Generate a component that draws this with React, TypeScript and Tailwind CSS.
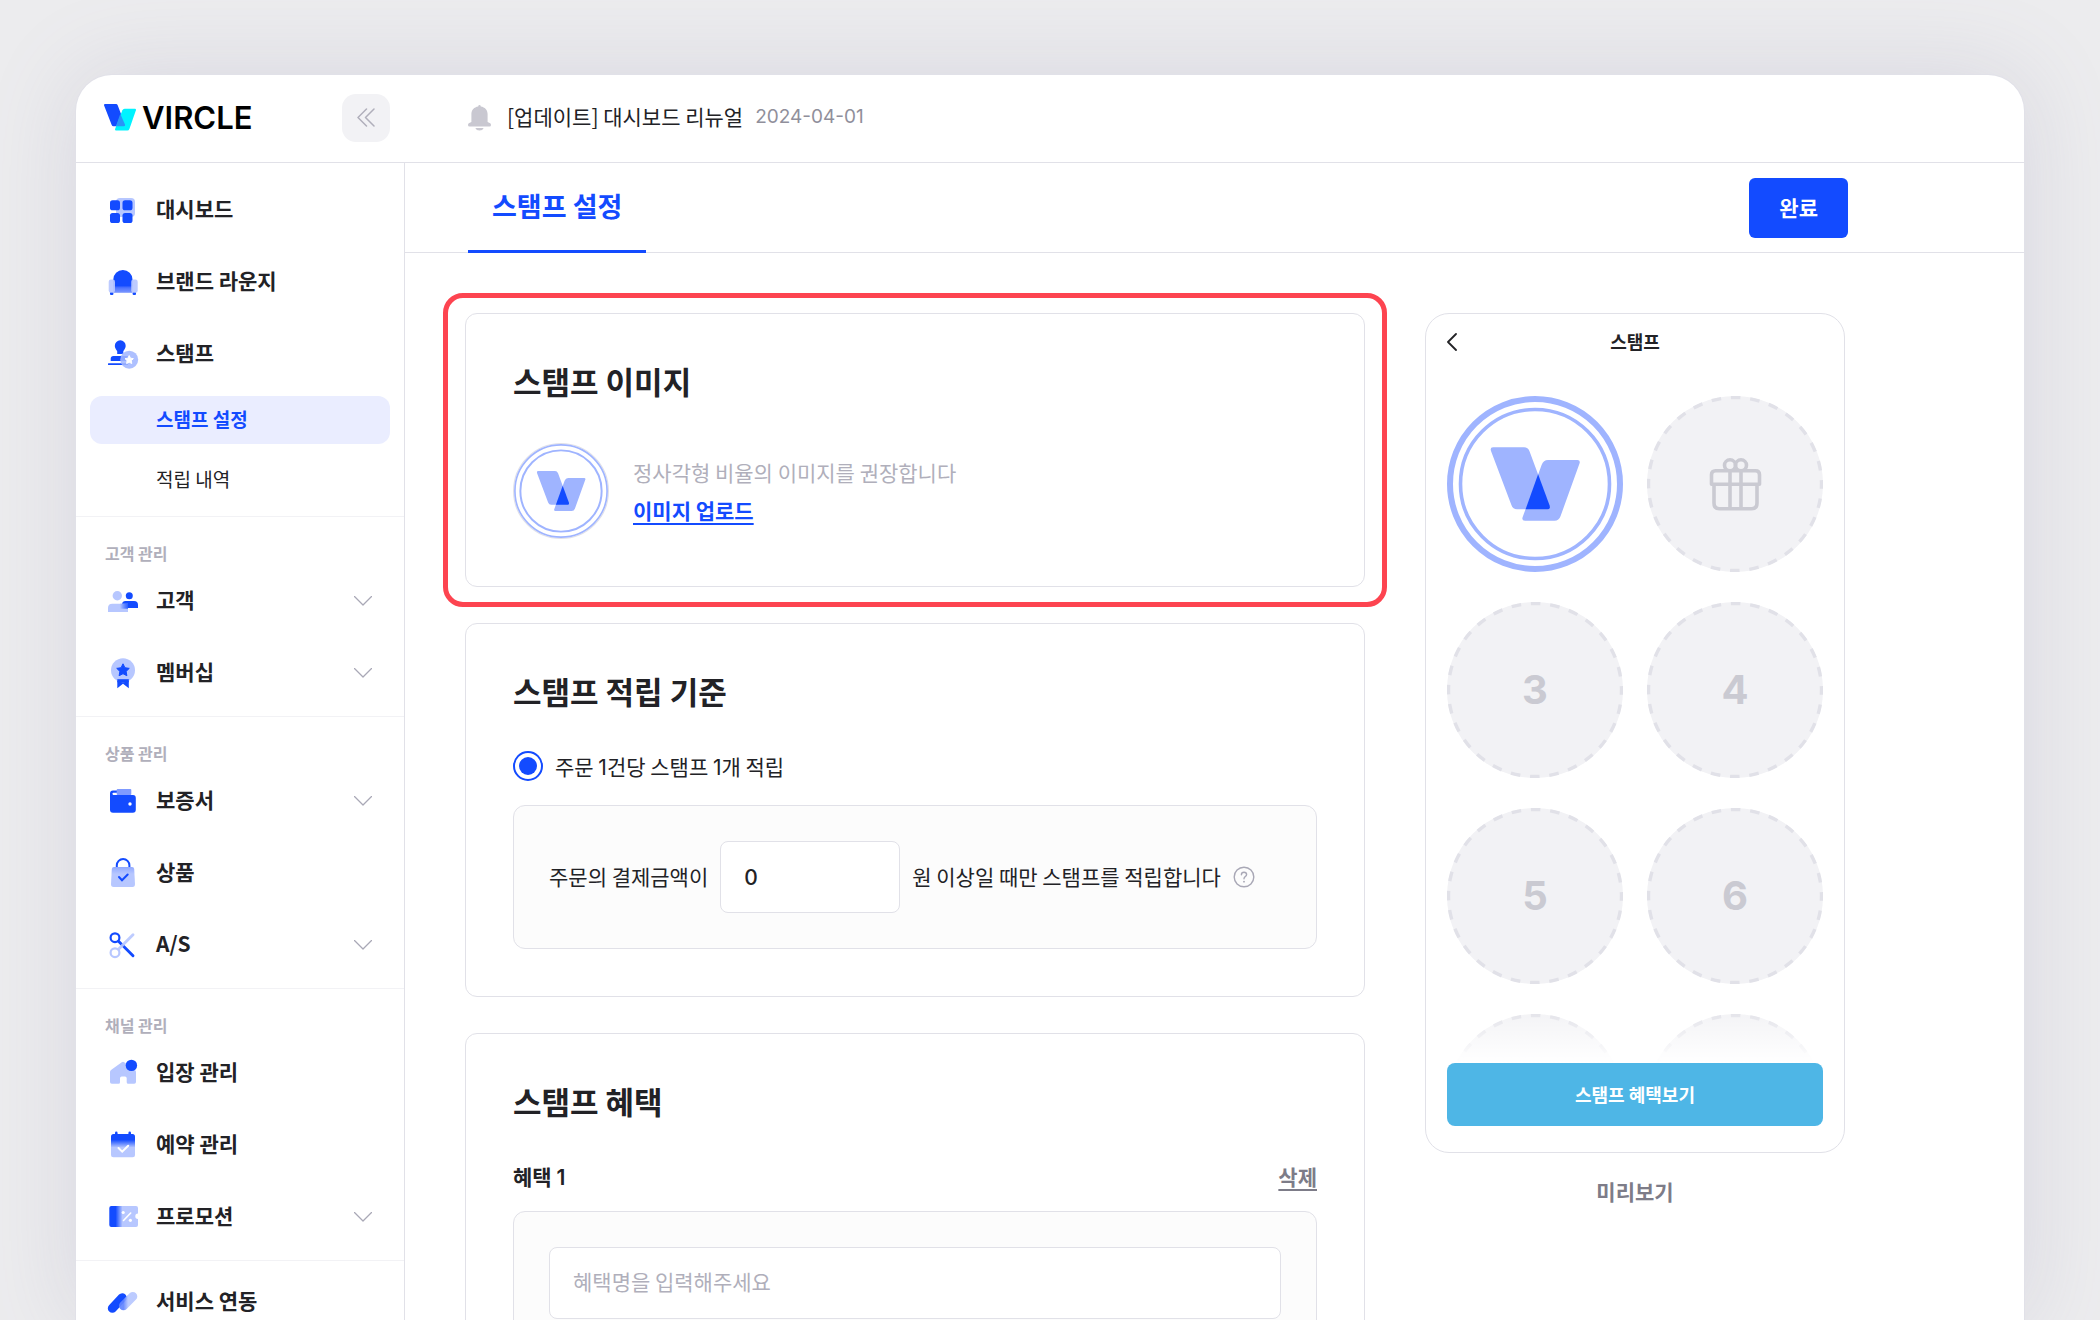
import React, { ReactNode } from 'react'

const StampLogo: React.FC<{ thin?: boolean; className?: string }> = ({ thin = false, className }) => (
  <svg viewBox="0 0 176 176" className={className} fill="none" aria-hidden="true">
    <circle cx="88" cy="88" r="88" fill="#fff" />
    {thin && <circle cx="88" cy="88" r="87" stroke="#e1e1e8" strokeWidth="2" />}
    <circle cx="88" cy="88" r={thin ? 84.5 : 85} stroke="#9fb4ff" strokeWidth={thin ? 3 : 6} />
    <circle cx="88" cy="88" r="74.5" stroke="#9fb4ff" strokeWidth="3.6" />
    <path
      d="M46 51.3H77Q81 51.3 82.6 55.5L102.6 109.5Q103.8 113.3 100.5 113.3H70Q66 113.3 64.4 109L44 55Q42.8 51.3 46 51.3Z"
      fill="#9fb4ff"
    />
    <path
      d="M101 64H130.4Q133.7 64 132.5 67.5L113.6 120Q112 124.7 107.5 124.7H78Q74.5 124.7 75.6 121.3L94.6 69Q96.5 64 101 64Z"
      fill="#9fb4ff"
    />
    <path d="M91.1 78.3L102.6 109.5Q103.8 113.3 100.5 113.3H78.6Z" fill="#134bff" />
  </svg>
)

const Logo: React.FC = () => (
  <a href="#home" className="flex items-center gap-[6px]">
    <svg width="32" height="27" viewBox="0 0 32 27" aria-hidden="true">
      <path d="M1 0H12Q13.2 0 13.7 1.2L21 20.6Q21.5 22.3 20 22.3H9.4Q8.2 22.3 7.7 21L.1 1.5Q-.3 0 1 0Z" fill="#134bff" />
      <path d="M20.6 4.8H31Q32.3 4.8 31.9 6.3L25.4 25Q24.8 26.5 23.4 26.5H12Q10.7 26.5 11.1 25L18.4 6.3Q19 4.8 20.6 4.8Z" fill="#00f3ff" />
      <path d="M16.3 9.8L21 20.6Q21.5 22.3 20 22.3H12Z" fill="#2994f7" />
    </svg>
    <span className="font-['Inter',sans-serif] text-[31px] leading-8 font-semibold text-black">VIRCLE</span>
  </a>
)

const starPoints = (cx: number, cy: number, r: number) =>
  Array.from({ length: 10 }, (_, i) => {
    const a = -Math.PI / 2 + (i * Math.PI) / 5
    const d = i % 2 ? r * 0.5 : r
    return `${(cx + d * Math.cos(a)).toFixed(2)},${(cy + d * Math.sin(a)).toFixed(2)}`
  }).join(' ')

const icons: Record<string, ReactNode> = {
  dashboard: (
    <>
      <rect x="8" y="3" width="19" height="19" rx="4" fill="#b7c7ff" />
      <rect x="2" y="5.3" width="10" height="10" rx="2.6" fill="#134bff" />
      <rect x="14.5" y="5.3" width="10" height="10" rx="2.6" fill="#134bff" />
      <rect x="2" y="18" width="10" height="10" rx="2.6" fill="#134bff" />
      <rect x="14.5" y="18" width="10" height="10" rx="2.6" fill="#134bff" />
    </>
  ),
  lounge: (
    <>
      <defs>
        <linearGradient id="seat" x1="0" y1="0" x2="0" y2="1">
          <stop offset="0" stopColor="#134bff" />
          <stop offset=".3" stopColor="#4d73ff" />
          <stop offset="1" stopColor="#7d99ff" />
        </linearGradient>
      </defs>
      <rect x="2" y="25" width="3.4" height="3" rx="1" fill="#134bff" />
      <rect x="24.6" y="25" width="3.4" height="3" rx="1" fill="#134bff" />
      <path d="M5.3 12.5a9.6 9.6 0 0 1 19.2 0V19H5.3Z" fill="#134bff" />
      <rect x="5.3" y="18.6" width="19.2" height="7.2" fill="url(#seat)" />
      <rect x="0.7" y="12.6" width="6.3" height="13.2" rx="2.2" fill="#b7c7ff" fillOpacity=".92" />
      <rect x="23.2" y="12.6" width="6.5" height="13.2" rx="2.2" fill="#b7c7ff" fillOpacity=".92" />
    </>
  ),
  stamp: (
    <>
      <path d="M12.3 1.3a5.5 5.5 0 0 1 5.4 5.6c0 2.4-1.8 3.6-2.4 5.4V15H9.2v-2.7C8.6 10.5 6.8 9.3 6.8 6.9a5.5 5.5 0 0 1 5.5-5.6Z" fill="#134bff" />
      <path d="M5.5 17H19q2 0 2 2v3H2.7v-2.2Q2.7 17 5.5 17Z" fill="#134bff" />
      <rect x="0" y="24.3" width="20" height="1.8" rx=".5" fill="#134bff" />
      <circle cx="21.2" cy="20.7" r="9" fill="#a3b7ff" fillOpacity=".88" />
      <polygon points={starPoints(21.2, 21, 4.4)} fill="#fff" stroke="#fff" strokeLinejoin="round" />
    </>
  ),
  customer: (
    <>
      <defs>
        <linearGradient id="overlap" x1="0" y1="0" x2="1" y2="0">
          <stop offset="0" stopColor="#b7c7ff" />
          <stop offset="1" stopColor="#134bff" stopOpacity=".85" />
        </linearGradient>
      </defs>
      <circle cx="21.3" cy="9.7" r="3.5" fill="#134bff" />
      <path d="M14 22v-3.5Q14 15 17.5 15H26q4 0 4 4v3Z" fill="#134bff" />
      <circle cx="9.3" cy="9.7" r="4.7" fill="#b7c7ff" />
      <path d="M0 26v-4q0-4.3 4.3-4.3H20V26Z" fill="#b7c7ff" />
      <rect x="12" y="17.7" width="8" height="5" fill="url(#overlap)" />
    </>
  ),
  membership: (
    <>
      <path d="M9.3 20h11.5v10.3L15 25.8l-5.7 4.5Z" fill="#134bff" />
      <circle cx="15" cy="12.3" r="12" fill="#b7c7ff" />
      <path d="M9.3 21.2h11.5v3H9.3Z" fill="#134bff" />
      <polygon points={starPoints(15, 12.4, 6.6)} fill="#134bff" stroke="#134bff" strokeLinejoin="round" />
    </>
  ),
  wallet: (
    <>
      <path d="M5 4.5h6V9h14q2.8 0 2.8 3v11.7q0 3-3 3H5q-3 0-3-3V7.5q0-3 3-3Z" fill="#134bff" />
      <rect x="4.5" y="6.7" width="6" height="2.2" rx=".8" fill="#fff" />
      <rect x="8.7" y="3" width="14.6" height="6" rx="1" fill="#7f9aff" />
      <circle cx="22" cy="18" r="1.7" fill="#fff" />
    </>
  ),
  bag: (
    <>
      <defs>
        <linearGradient id="bag" x1="0" y1="0" x2="0" y2="1">
          <stop offset="0" stopColor="#91a9ff" />
          <stop offset=".35" stopColor="#b7c7ff" />
        </linearGradient>
      </defs>
      <path d="M8.8 10V7.3a6.3 6.3 0 0 1 12.6 0V10" fill="none" stroke="#134bff" strokeWidth="2" />
      <path d="M6 9h18q2 0 2.2 2L27 26q.1 3-2.5 3h-19Q2.9 29 3 26l.8-15Q4 9 6 9Z" fill="url(#bag)" />
      <path d="M11 19l3 3.2 5.7-5.7" fill="none" stroke="#134bff" strokeWidth="2" strokeLinecap="round" />
    </>
  ),
  scissors: (
    <g fill="none" strokeLinecap="round">
      <circle cx="7" cy="7.7" r="4.4" stroke="#134bff" strokeWidth="2.2" />
      <path d="M10.5 11.3L25 25.8" stroke="#134bff" strokeWidth="2.9" />
      <circle cx="7" cy="22.7" r="4.4" stroke="#b7c7ff" strokeWidth="2.2" />
      <path d="M10.5 19.3L25 4.8" stroke="#b7c7ff" strokeOpacity=".9" strokeWidth="2.9" />
    </g>
  ),
  house: (
    <>
      <path d="M13.8 4.2q1.2-.9 2.4 0L27 12q1 .8 1 2v10q0 1.8-1.8 1.8h-6q-1.5 0-1.5-1.5v-4q0-1.7-1.7-1.7h-3.3q-1.7 0-1.7 1.7v4q0 1.5-1.5 1.5H3.8Q2 25.8 2 24V14q0-1.2 1-2Z" fill="#b7c7ff" />
      <circle cx="23.4" cy="7.4" r="5.7" fill="#134bff" />
    </>
  ),
  calendar: (
    <>
      <defs>
        <linearGradient id="cal" x1="0" y1="0" x2="0" y2="1">
          <stop offset=".25" stopColor="#134bff" />
          <stop offset=".58" stopColor="#b7c7ff" />
        </linearGradient>
      </defs>
      <rect x="7" y="1.6" width="2.6" height="5" rx="1.3" fill="#134bff" />
      <rect x="20.4" y="1.6" width="2.6" height="5" rx="1.3" fill="#134bff" />
      <rect x="3" y="4" width="24" height="23.3" rx="2.5" fill="url(#cal)" />
      <path d="M10.5 18l3.7 3.6 6-5.9" fill="none" stroke="#fff" strokeWidth="2" strokeLinecap="round" />
    </>
  ),
  ticket: (
    <>
      <defs>
        <linearGradient id="ticket" x1="0" y1="0" x2="1" y2="0">
          <stop offset=".22" stopColor="#134bff" />
          <stop offset=".46" stopColor="#b7c7ff" />
        </linearGradient>
      </defs>
      <path d="M3.3 4H28q2 0 2 2v5.6a2.7 2.7 0 0 0 0 5.4v6q0 2-2 2H3.3q-2 0-2-2V6q0-2 2-2Z" fill="url(#ticket)" />
      <circle cx="15.2" cy="10.5" r="1.6" fill="#fff" />
      <circle cx="22.4" cy="18.3" r="1.6" fill="#fff" />
      <path d="M15.5 18.5l7.2-7.5" stroke="#fff" strokeWidth="1.6" strokeLinecap="round" />
    </>
  ),
  link: (
    <>
      <defs>
        <linearGradient id="capsule" x1="0" y1="0" x2="1" y2="0">
          <stop offset="0" stopColor="#6385ff" />
          <stop offset=".5" stopColor="#b7c7ff" />
        </linearGradient>
      </defs>
      <path d="M4.3 21.3L14.3 10.7" stroke="#134bff" strokeWidth="9" strokeLinecap="round" />
      <path d="M15.5 18.7L24.8 9.4" stroke="url(#capsule)" strokeOpacity=".92" strokeWidth="9" strokeLinecap="round" />
    </>
  ),
}

const ChevronDown: React.FC = () => (
  <svg width="18" height="10" viewBox="0 0 18 10" fill="none" stroke="#a9a8b6" strokeWidth="1.3" aria-hidden="true">
    <path d="M.5.5L9 9 17.5.5" strokeLinecap="round" strokeLinejoin="round" />
  </svg>
)

// Digits are set in Inter, Hangul in the page font
const Num: React.FC<{ children: ReactNode }> = ({ children }) => (
  <span className="font-['Inter',sans-serif] leading-none">{children}</span>
)

interface NavItemProps {
  icon: string
  label: string
  expandable?: boolean
}

const NavItem: React.FC<NavItemProps> = ({ icon, label, expandable = false }) => (
  <a href={`#${icon}`} className="flex h-[72px] items-center pr-8 pl-8 text-[21px] font-semibold text-[#222226]">
    <svg width="30" height="30" viewBox="0 0 30 30" className="mr-[18px] overflow-visible" aria-hidden="true">
      {icons[icon]}
    </svg>
    <span className="flex-1 pb-[2px]">{label}</span>
    {expandable && <ChevronDown />}
  </a>
)

interface NavGroup {
  title: string
  items: NavItemProps[]
}

const groups: NavGroup[] = [
  {
    title: '고객 관리',
    items: [
      { icon: 'customer', label: '고객', expandable: true },
      { icon: 'membership', label: '멤버십', expandable: true },
    ],
  },
  {
    title: '상품 관리',
    items: [
      { icon: 'wallet', label: '보증서', expandable: true },
      { icon: 'bag', label: '상품' },
      { icon: 'scissors', label: 'A/S', expandable: true },
    ],
  },
  {
    title: '채널 관리',
    items: [
      { icon: 'house', label: '입장 관리' },
      { icon: 'calendar', label: '예약 관리' },
      { icon: 'ticket', label: '프로모션', expandable: true },
    ],
  },
]

const Sidebar: React.FC = () => (
  <nav className="w-[329px] shrink-0 overflow-hidden border-r border-[#e1e1e8]">
    <div className="pt-[11px] pb-3">
      <NavItem icon="dashboard" label="대시보드" />
      <NavItem icon="lounge" label="브랜드 라운지" />
      <NavItem icon="stamp" label="스탬프" />
      <div className="mt-[6px] flex flex-col gap-3 pr-[14px] pl-[14px] text-[19px]">
        <a href="#stamp-settings" className="flex h-12 items-center rounded-xl bg-[#eaedff] pb-[2px] pl-[66px] font-semibold text-[#134bff]">
          스탬프 설정
        </a>
        <a href="#stamp-history" className="flex h-12 items-center rounded-xl pb-[2px] pl-[66px] text-[#222226]">
          적립 내역
        </a>
      </div>
    </div>
    {groups.map((group) => (
      <div key={group.title} className="border-t border-[#f2f2f5] pt-6 pb-[7px]">
        <h2 className="px-[29px] text-[16px] leading-6 font-semibold text-[#b0afbb]">{group.title}</h2>
        {group.items.map((item) => (
          <NavItem key={item.icon} {...item} />
        ))}
      </div>
    ))}
    <div className="border-t border-[#f2f2f5] pt-[5px]">
      <NavItem icon="link" label="서비스 연동" />
    </div>
  </nav>
)

const TopBar: React.FC = () => (
  <header className="flex h-[88px] shrink-0 items-center border-b border-[#e1e1e8] pb-[2px]">
    <div className="flex w-[329px] shrink-0 items-center justify-between pr-[15px] pl-7">
      <Logo />
      <button type="button" aria-label="메뉴 접기" className="flex size-12 items-center justify-center rounded-[14px] bg-[#f2f2f5]">
        <svg width="18" height="19" viewBox="0 0 18 19" fill="none" stroke="#b0afbb" strokeWidth="1.5" strokeLinecap="round" strokeLinejoin="round">
          <path d="M9.5 1L1 9.5 9.5 18M17 1L8.5 9.5 17 18" />
        </svg>
      </button>
    </div>
    <a href="#notice" className="flex items-center pl-[63px]">
      <svg width="23" height="26" viewBox="0 0 23 26" fill="#c9c8d1" aria-hidden="true">
        <path d="M11.5 0q1.1 0 1.3 1.4C16.9 2 19.6 5 19.6 9v8l2.6 1.2q.8.5.8 1.8 0 1.5-1.5 1.5h-20Q0 21.5 0 20q0-1.3.8-1.8L3.4 17V9c0-4 2.7-7 6.8-7.6Q10.4 0 11.5 0Z" />
        <path d="M7.3 23h8.4q-1 2.6-4.2 2.6T7.3 23Z" />
      </svg>
      <span className="ml-4 pb-[2px] text-[21px] text-[#222226]">[업데이트] 대시보드 리뉴얼</span>
      <time className="ml-3 font-['Inter',sans-serif] text-[19px] text-[#908f9b]">2024-04-01</time>
    </a>
  </header>
)

interface CardProps {
  title: string
  children: ReactNode
}

const Card: React.FC<CardProps> = ({ title, children }) => (
  <section className="rounded-xl border border-[#e1e1e8] bg-white p-[47px]">
    <h2 className="mb-10 text-[31px] leading-10 font-bold text-[#222226]">{title}</h2>
    {children}
  </section>
)

const Panel: React.FC<{ children: ReactNode }> = ({ children }) => (
  <div className="rounded-xl border border-[#e1e1e8] bg-[#fcfcfc] p-[35px] text-[21px] text-[#222226]">{children}</div>
)

const StampImageCard: React.FC = () => (
  <div className="relative">
    <Card title="스탬프 이미지">
      <div className="flex items-center gap-6 pt-[2px] text-[21px]">
        <StampLogo thin className="size-24" />
        <div className="flex flex-col items-start gap-2 leading-[30px]">
          <p className="text-[#b0afbb]">정사각형 비율의 이미지를 권장합니다</p>
          <button type="button" className="font-semibold text-[#134bff] underline underline-offset-4">
            이미지 업로드
          </button>
        </div>
      </div>
    </Card>
    <div className="pointer-events-none absolute -inset-x-[22px] -inset-y-5 rounded-[20px] border-[5px] border-[#fd4450]" />
  </div>
)

const StampRuleCard: React.FC = () => (
  <Card title="스탬프 적립 기준">
    <label className="mb-6 flex items-center gap-3 text-[21px] leading-[30px] text-[#222226]">
      <input
        type="radio"
        name="rule"
        defaultChecked
        className="size-[30px] appearance-none rounded-full border-2 border-[#134bff] bg-clip-content p-1 checked:bg-[#134bff]"
      />
      <span>
        주문 <Num>1</Num>건당 스탬프 <Num>1</Num>개 적립
      </span>
    </label>
    <Panel>
      <div className="flex items-center gap-3">
        <label htmlFor="min-amount">주문의 결제금액이</label>
        <input
          id="min-amount"
          type="text"
          defaultValue="0"
          className="h-[72px] w-[180px] rounded-lg border border-[#e1e1e8] bg-white px-[23px] font-['Inter',sans-serif] font-medium"
        />
        <span>원 이상일 때만 스탬프를 적립합니다</span>
        <button type="button" aria-label="도움말">
          <svg width="22" height="22" viewBox="0 0 22 22" fill="none" stroke="#a9a8b6" strokeWidth="1.4" strokeLinecap="round">
            <circle cx="11" cy="11" r="9.8" />
            <path d="M8.4 8.8q0-2.6 2.6-2.6t2.6 2.3q0 1.3-1.4 2.1Q11 11.3 11 12.8" />
            <path d="M11 15.6v.1" strokeWidth="1.8" />
          </svg>
        </button>
      </div>
    </Panel>
  </Card>
)

const StampBenefitCard: React.FC = () => (
  <Card title="스탬프 혜택">
    <div className="mb-5 flex items-center justify-between text-[21px] leading-[30px] font-semibold">
      <h3 className="text-[#222226]">
        혜택 <Num>1</Num>
      </h3>
      <button type="button" className="text-[#7d7c88] underline underline-offset-4">
        삭제
      </button>
    </div>
    <Panel>
      <input
        type="text"
        aria-label="혜택명"
        placeholder="혜택명을 입력해주세요"
        className="h-[72px] w-full rounded-lg border border-[#e1e1e8] bg-white px-[23px] pb-1 placeholder:text-[#b0afbb]"
      />
    </Panel>
  </Card>
)

const EmptyStamp: React.FC<{ children?: ReactNode }> = ({ children }) => (
  <div className="relative flex size-[176px] items-center justify-center font-['Inter',sans-serif] text-[40px] font-bold text-[#cacad2]">
    <svg viewBox="0 0 176 176" className="absolute inset-0" aria-hidden="true">
      <circle cx="88" cy="88" r="88" fill="#f2f2f5" />
      <circle
        cx="88"
        cy="88"
        r="86.5"
        fill="none"
        stroke="#e1e1e8"
        strokeWidth="3.4"
        strokeDasharray="9.7 9.71"
        strokeDashoffset="4.85"
      />
    </svg>
    <span className="relative">{children}</span>
  </div>
)

const GiftIcon: React.FC = () => (
  <svg width="53" height="53" viewBox="0 0 53 53" fill="none" stroke="#cacad2" strokeWidth="3.6" aria-hidden="true">
    <circle cx="21" cy="7.3" r="5.5" />
    <circle cx="32" cy="7.3" r="5.5" />
    <path d="M6.5 12.8h40q4 0 4 4v9.4H2.5v-9.4q0-4 4-4Z" fill="#f2f2f5" strokeLinejoin="round" />
    <path d="M5 26v19q0 5.7 5.7 5.7h31.6q5.7 0 5.7-5.7V26M21 13v37.5M32 13v37.5" />
  </svg>
)

const PhonePreview: React.FC = () => (
  <aside className="w-[420px] shrink-0">
    <div className="flex h-[840px] flex-col rounded-3xl border border-[#e1e1e8] bg-white px-[21px] pb-[26px]">
      <div className="grid h-14 shrink-0 grid-cols-[24px_1fr_24px] items-center">
        <button type="button" aria-label="뒤로">
          <svg width="11" height="18" viewBox="0 0 11 18" fill="none" stroke="#222226" strokeWidth="1.8" strokeLinecap="round" strokeLinejoin="round">
            <path d="M9 1L1 9l8 8" />
          </svg>
        </button>
        <h2 className="pb-[2px] text-center text-[18px] font-semibold text-[#222226]">스탬프</h2>
      </div>
      <div className="relative min-h-0 flex-1 overflow-hidden pt-[26px]">
        <div className="grid grid-cols-[176px_176px] justify-between gap-y-[30px]">
          <StampLogo className="size-[176px]" />
          <EmptyStamp>
            <GiftIcon />
          </EmptyStamp>
          {[3, 4, 5, 6].map((n) => (
            <EmptyStamp key={n}>{n}</EmptyStamp>
          ))}
          <EmptyStamp />
          <EmptyStamp />
        </div>
        <div className="absolute inset-x-0 bottom-0 h-14 bg-linear-to-b from-white/0 to-white" />
      </div>
      <button type="button" className="h-[63px] shrink-0 rounded-lg bg-[#4eb6e6] text-[18px] font-semibold text-white">
        스탬프 혜택보기
      </button>
    </div>
    <p className="mt-6 text-center text-[21px] leading-7 font-semibold text-[#7d7c88]">미리보기</p>
  </aside>
)

export default function App() {
  return (
    <div className="flex h-screen flex-col overflow-hidden bg-[#ececee] px-[76px] pt-[75px] font-['Noto_Sans_CJK_KR',sans-serif]">
      <div className="flex min-h-0 flex-1 flex-col overflow-hidden rounded-t-[36px] bg-white shadow-[0_0_0_1px_#e1e1e8,0_0_90px_rgba(120,115,160,0.18)]">
        <TopBar />
        <div className="flex min-h-0 flex-1">
          <Sidebar />
          <main className="min-w-0 flex-1 overflow-hidden">
            <div className="h-[90px] border-b border-[#e1e1e8] px-[63px]">
              <div className="flex h-[90px] max-w-[1380px] items-center justify-between">
                <a
                  href="#stamp-settings"
                  className="flex h-full items-center border-b-[3px] border-[#134bff] px-6 text-[27px] font-semibold text-[#134bff]"
                >
                  스탬프 설정
                </a>
                <button type="button" className="h-[60px] rounded-md bg-[#134bff] px-[30px] text-[21px] font-semibold text-white">
                  완료
                </button>
              </div>
            </div>
            <div className="px-[60px] pt-[60px]">
              <div className="flex max-w-[1380px] items-start gap-[60px]">
                <div className="flex min-w-0 flex-1 flex-col gap-9">
                  <StampImageCard />
                  <StampRuleCard />
                  <StampBenefitCard />
                </div>
                <PhonePreview />
              </div>
            </div>
          </main>
        </div>
      </div>
    </div>
  )
}
